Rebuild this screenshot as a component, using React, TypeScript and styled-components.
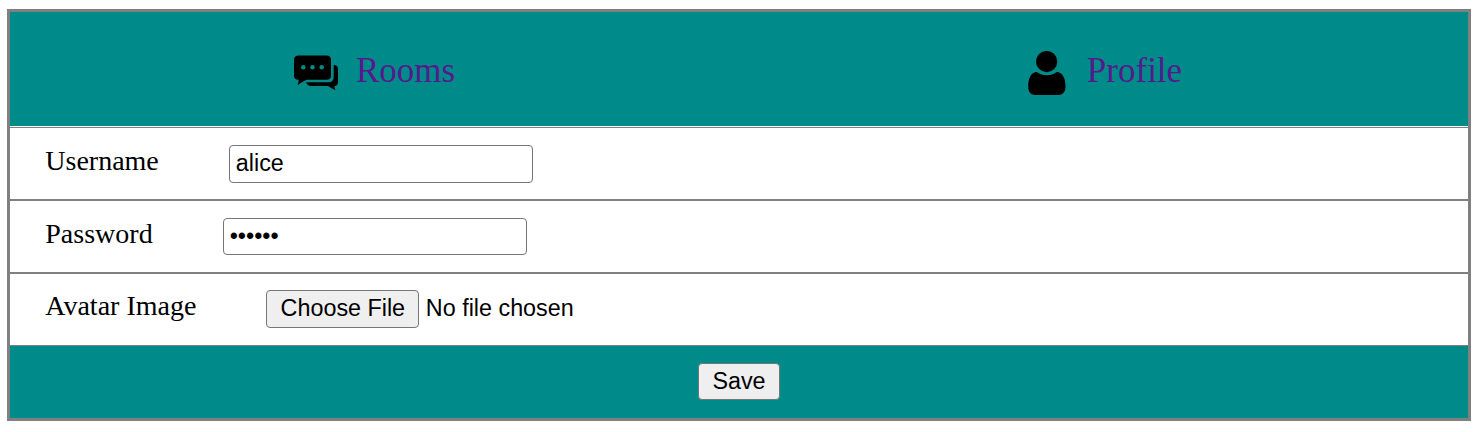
import React from "react";
import styled, { createGlobalStyle, css } from "styled-components";

const GlobalStyle = createGlobalStyle`
  body {
    margin: 0;
    background: #fff;
    color: #000;
    font-family: "Liberation Serif", "Times New Roman", serif;
  }
  * { box-sizing: border-box; }
`;

const Panel = styled.main`
  width: 1464px;
  height: 412px;
  margin: 9px 0 0 7px;
  border: 3px solid gray;
  display: flow-root;
`;

const Nav = styled.nav`
  display: grid;
  grid-template-columns: 1fr 1fr;
  height: 114px;
  margin-bottom: 1px;
  background: darkcyan;
`;

const NavItem = styled.a`
  display: flex;
  align-items: center;
  justify-content: center;
  gap: 18px;
  padding-top: 4px;
  color: #551a8b;
  font-size: 35px;
  line-height: 40px;
  text-decoration: none;

  svg {
    width: 44px;
    height: 44px;
    flex: none;
    margin-top: 4px;
    margin-bottom: 1px;
    overflow: visible;
    color: #000;
  }
`;

const Row = styled.div<{ $inset?: number }>`
  display: flex;
  align-items: flex-start;
  height: 73px;
  padding: ${(p) => p.$inset ?? 17}px 0 0 35px;
  border-top: 1px solid gray;
  border-bottom: 1px solid gray;
`;

const Label = styled.label`
  margin-right: 70px;
  padding-left: 0.3px;
  font-size: 28px;
  line-height: 32px;
`;

const control = css`
  font-family: "Liberation Sans", Arial, sans-serif;
  font-size: 23.33px;
  color: #000;
  border: 1px solid #767676;
  border-radius: 4px;
`;

const Input = styled.input<{ $height: number; $lift: number }>`
  ${control}
  width: 304px;
  height: ${(p) => p.$height}px;
  margin: 0;
  padding: 0 6px ${(p) => p.$lift}px;
  background: #fff;
  outline: none;
`;

const Button = styled.button<{ $width: number; $height: number; $lift: number }>`
  ${control}
  width: ${(p) => p.$width}px;
  height: ${(p) => p.$height}px;
  margin: 0;
  padding: 0 0 ${(p) => p.$lift}px;
  background: #efefef;
  white-space: nowrap;
`;

const FileStatus = styled.span`
  margin-left: 6.5px;
  font-family: "Liberation Sans", Arial, sans-serif;
  font-size: 23.33px;
  line-height: 36px;
`;

const Footer = styled.footer`
  display: flex;
  justify-content: center;
  height: 72px;
  padding-top: 17px;
  background: darkcyan;
`;

const RoomsIcon = () => (
  <svg viewBox="0 0 44 44" fill="currentColor" aria-hidden="true">
    <path
      fillRule="evenodd"
      d="M4.5 4.5H32.5Q37 4.5 37 9V24.5Q37 28.8 32.5 28.8H13Q9.5 30 3.5 34.2Q4.8 31 4.6 28.8Q0 28.8 0 24.5V9Q0 4.5 4.5 4.5ZM9.3 14a2.3 2.3 0 1 0 0 4.6 2.3 2.3 0 0 0 0-4.6ZM18.5 14a2.3 2.3 0 1 0 0 4.6 2.3 2.3 0 0 0 0-4.6ZM27.7 14a2.3 2.3 0 1 0 0 4.6 2.3 2.3 0 0 0 0-4.6Z"
    />
    <path d="M39.7 14Q44 14 44 18V31Q44 34.7 40.5 35Q40.3 36.8 41.5 39.3Q37.5 37.5 34 35H17Q13.5 35 12 31.3H34.5Q39.7 31.3 39.7 26Z" />
  </svg>
);

const ProfileIcon = () => (
  <svg viewBox="0 0 44 44" fill="currentColor" aria-hidden="true">
    <circle cx="21.7" cy="10.6" r="10.6" />
    <path d="M12 21Q16 24.2 21.7 24.2T31.6 21C37.8 21 40.5 28 40.5 35.5C40.5 41 38 44 33 44H10.5C5.5 44 3.2 41 3.2 35.5C3.2 28 5.8 21 12 21Z" />
  </svg>
);

export default function App() {
  return (
    <>
      <GlobalStyle />
      <Panel>
        <Nav>
          <NavItem>
            <RoomsIcon />
            Rooms
          </NavItem>
          <NavItem>
            <ProfileIcon />
            Profile
          </NavItem>
        </Nav>
        <Row>
          <Label htmlFor="username">Username</Label>
          <Input id="username" type="text" defaultValue="alice" $height={38} $lift={2} />
        </Row>
        <Row>
          <Label htmlFor="password">Password</Label>
          <Input id="password" type="password" defaultValue="secret" $height={37} $lift={0} />
        </Row>
        <Row $inset={16}>
          <Label>Avatar Image</Label>
          <Button type="button" $width={153} $height={38} $lift={2}>Choose File</Button>
          <FileStatus>No file chosen</FileStatus>
        </Row>
        <Footer>
          <Button type="submit" $width={82} $height={37} $lift={0}>Save</Button>
        </Footer>
      </Panel>
    </>
  );
}
